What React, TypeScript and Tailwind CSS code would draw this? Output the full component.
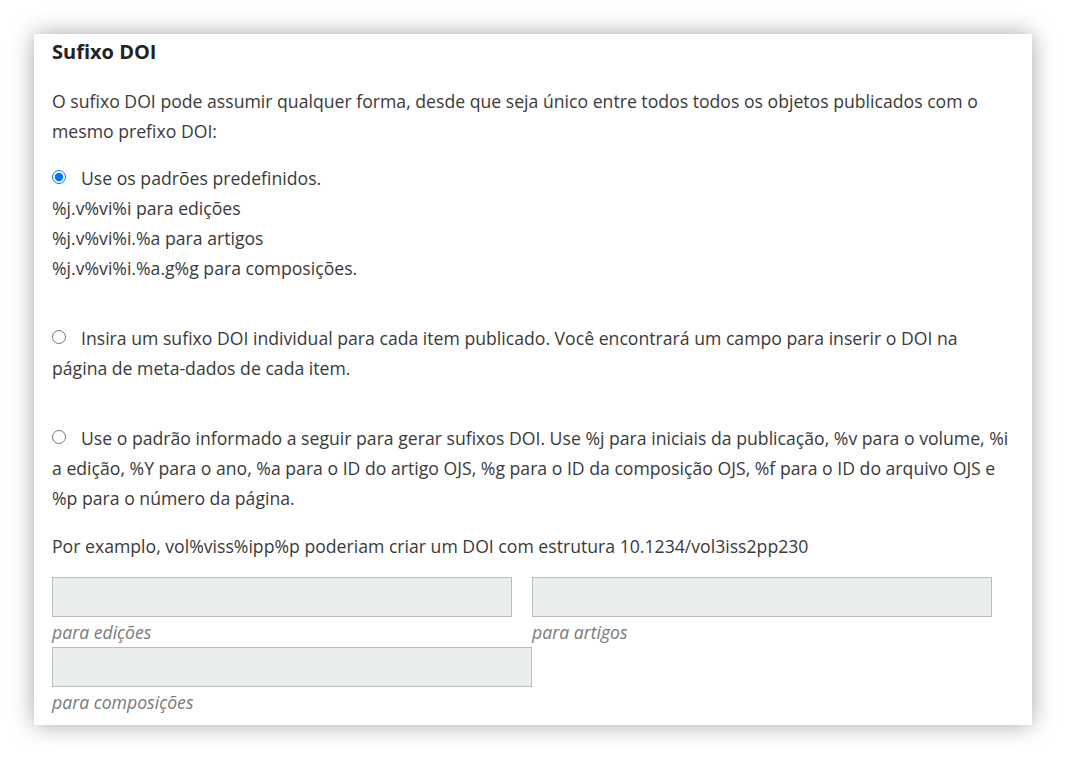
import React from "react";

export default function App() {
  return (
    <div className="min-h-[760px] w-full bg-white pt-[34px] pl-[34px]" style={{ fontFamily: '"Open Sans", "Noto Sans", sans-serif' }}>
      <div className="w-[998px] bg-white shadow-[0_0_22px_rgba(0,0,0,0.35)] px-[18px] pt-[3px] pb-[8px] text-[17.65px] leading-[30px] text-[#3a3a3a]">
        <div className="text-[20px] font-bold text-[#222] leading-[30px]">Sufixo DOI</div>
        <p className="mt-[19px]">
          O sufixo DOI pode assumir qualquer forma, desde que seja único entre todos todos os objetos publicados com o mesmo prefixo DOI:
        </p>
        <div className="mt-[17px]">
          <label className="block">
            <input type="radio" name="suffix" defaultChecked className="m-0 mr-[15px] w-[14px] h-[14px] align-[1px]" />
            Use os padrões predefinidos.
          </label>
          <div>%j.v%vi%i para edições</div>
          <div>%j.v%vi%i.%a para artigos</div>
          <div>%j.v%vi%i.%a.g%g para composições.</div>
        </div>
        <label className="block mt-[40px]">
          <input type="radio" name="suffix" className="m-0 mr-[15px] w-[14px] h-[14px] align-[1px]" />
          Insira um sufixo DOI individual para cada item publicado. Você encontrará um campo para inserir o DOI na página de meta-dados de cada item.
        </label>
        <label className="block mt-[40px]">
          <input type="radio" name="suffix" className="m-0 mr-[15px] w-[14px] h-[14px] align-[1px]" />
          Use o padrão informado a seguir para gerar sufixos DOI. Use %j para iniciais da publicação, %v para o volume, %i a edição, %Y para o ano, %a para o ID do artigo OJS, %g para o ID da composição OJS, %f para o ID do arquivo OJS e %p para o número da página.
        </label>
        <p className="mt-[18px]">Por examplo, vol%viss%ipp%p poderiam criar um DOI com estrutura 10.1234/vol3iss2pp230</p>
        <div className="mt-[16px] flex gap-[20px]">
          <div className="w-[460px]">
            <input type="text" className="block w-full h-[40px] bg-[#e9edee] border border-[#bcbcbc] outline-none" />
            <div className="italic text-[#7a7a7a] leading-[30px]">para edições</div>
          </div>
          <div className="w-[460px]">
            <input type="text" className="block w-full h-[40px] bg-[#e9edee] border border-[#bcbcbc] outline-none" />
            <div className="italic text-[#7a7a7a] leading-[30px]">para artigos</div>
          </div>
        </div>
        <div className="w-[480px]">
          <input type="text" className="block w-full h-[40px] bg-[#e9edee] border border-[#bcbcbc] outline-none" />
          <div className="italic text-[#7a7a7a] leading-[30px]">para composições</div>
        </div>
      </div>
    </div>
  );
}
